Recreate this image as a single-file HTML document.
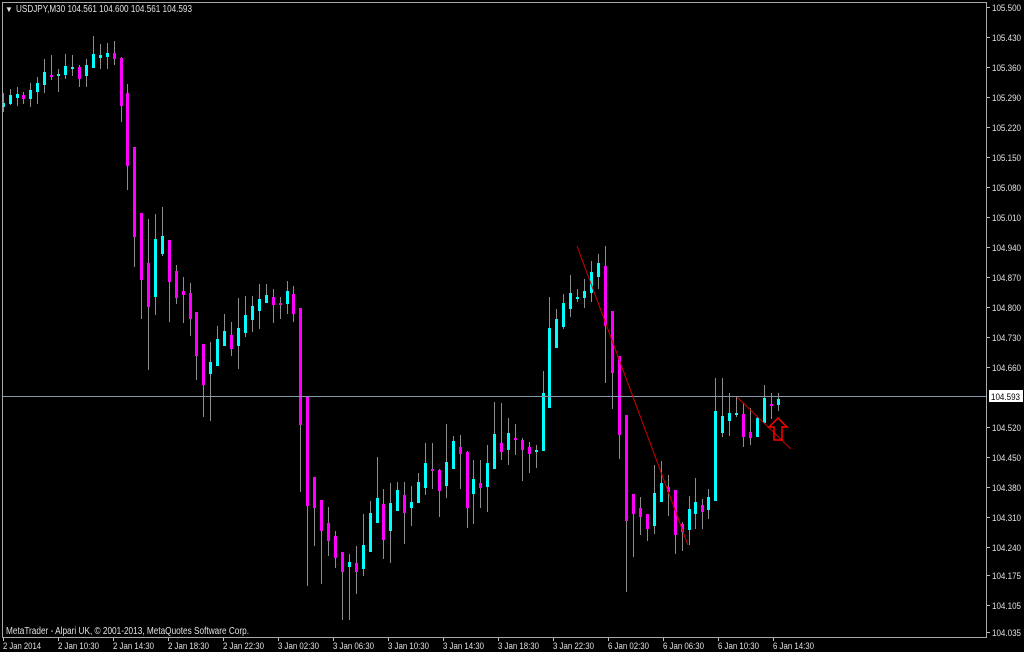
<!DOCTYPE html>
<html><head><meta charset="utf-8"><style>
html,body{margin:0;padding:0;background:#000;width:1024px;height:652px;overflow:hidden}
svg{display:block}
text{font-family:"Liberation Sans","DejaVu Sans",sans-serif;font-size:10px;fill:#e0e0e0}
#py text{font-size:9.5px}
#tx text{font-size:9.5px}
</style></head><body>
<svg id="s" width="1024" height="652" viewBox="0 0 1024 652" xmlns="http://www.w3.org/2000/svg">
<rect width="1024" height="652" fill="#000"/>
<g id="c"></g>
<line x1="2" y1="396.5" x2="986" y2="396.5" stroke="#8797ab" stroke-width="1"/>
<line x1="577" y1="246" x2="688" y2="545" stroke="#d00000" stroke-width="1"/>
<line x1="737" y1="397" x2="791" y2="449" stroke="#d00000" stroke-width="1"/>
<path d="M778 418 L787 427 L782 427 L782 440 L774 440 L774 427 L769 427 Z" fill="none" stroke="#ff0000" stroke-width="1.5"/>
<rect x="2.5" y="2.5" width="984" height="635" fill="none" stroke="#a8a8a8" stroke-width="1"/>
<text x="5" y="12" style="font-size:8px">▼</text>
<text x="16" y="12" textLength="176" lengthAdjust="spacingAndGlyphs">USDJPY,M30  104.561 104.600 104.561 104.593</text>
<text x="6" y="634" textLength="243" lengthAdjust="spacingAndGlyphs">MetaTrader - Alpari UK, © 2001-2013, MetaQuotes Software Corp.</text>
<g id="py">
<text x="992" y="11" textLength="29" lengthAdjust="spacingAndGlyphs">105.500</text>
<text x="992" y="41" textLength="29" lengthAdjust="spacingAndGlyphs">105.430</text>
<text x="992" y="71" textLength="29" lengthAdjust="spacingAndGlyphs">105.360</text>
<text x="992" y="101" textLength="29" lengthAdjust="spacingAndGlyphs">105.290</text>
<text x="992" y="131" textLength="29" lengthAdjust="spacingAndGlyphs">105.220</text>
<text x="992" y="161" textLength="29" lengthAdjust="spacingAndGlyphs">105.150</text>
<text x="992" y="191" textLength="29" lengthAdjust="spacingAndGlyphs">105.080</text>
<text x="992" y="221" textLength="29" lengthAdjust="spacingAndGlyphs">105.010</text>
<text x="992" y="251" textLength="29" lengthAdjust="spacingAndGlyphs">104.940</text>
<text x="992" y="281" textLength="29" lengthAdjust="spacingAndGlyphs">104.870</text>
<text x="992" y="311" textLength="29" lengthAdjust="spacingAndGlyphs">104.800</text>
<text x="992" y="341" textLength="29" lengthAdjust="spacingAndGlyphs">104.730</text>
<text x="992" y="371" textLength="29" lengthAdjust="spacingAndGlyphs">104.660</text>
<text x="992" y="431" textLength="29" lengthAdjust="spacingAndGlyphs">104.520</text>
<text x="992" y="461" textLength="29" lengthAdjust="spacingAndGlyphs">104.450</text>
<text x="992" y="491" textLength="29" lengthAdjust="spacingAndGlyphs">104.380</text>
<text x="992" y="521" textLength="29" lengthAdjust="spacingAndGlyphs">104.310</text>
<text x="992" y="551" textLength="29" lengthAdjust="spacingAndGlyphs">104.240</text>
<text x="992" y="579" textLength="29" lengthAdjust="spacingAndGlyphs">104.175</text>
<text x="992" y="609" textLength="29" lengthAdjust="spacingAndGlyphs">104.105</text>
<text x="992" y="636" textLength="29" lengthAdjust="spacingAndGlyphs">104.035</text>
</g>
<g stroke="#c0c0c0" stroke-width="1">
<line x1="987" y1="7.5" x2="990" y2="7.5"/><line x1="987" y1="37.5" x2="990" y2="37.5"/><line x1="987" y1="67.5" x2="990" y2="67.5"/><line x1="987" y1="97.5" x2="990" y2="97.5"/><line x1="987" y1="127.5" x2="990" y2="127.5"/><line x1="987" y1="157.5" x2="990" y2="157.5"/><line x1="987" y1="187.5" x2="990" y2="187.5"/><line x1="987" y1="217.5" x2="990" y2="217.5"/><line x1="987" y1="247.5" x2="990" y2="247.5"/><line x1="987" y1="277.5" x2="990" y2="277.5"/><line x1="987" y1="307.5" x2="990" y2="307.5"/><line x1="987" y1="337.5" x2="990" y2="337.5"/><line x1="987" y1="367.5" x2="990" y2="367.5"/><line x1="987" y1="427.5" x2="990" y2="427.5"/><line x1="987" y1="457.5" x2="990" y2="457.5"/><line x1="987" y1="487.5" x2="990" y2="487.5"/><line x1="987" y1="517.5" x2="990" y2="517.5"/><line x1="987" y1="547.5" x2="990" y2="547.5"/><line x1="987" y1="575.5" x2="990" y2="575.5"/><line x1="987" y1="605.5" x2="990" y2="605.5"/><line x1="987" y1="632.5" x2="990" y2="632.5"/>
</g>
<rect x="989" y="390" width="34" height="12" fill="#fff"/>
<text x="991" y="400" style="fill:#000;font-size:9.5px" textLength="29" lengthAdjust="spacingAndGlyphs">104.593</text>
<g id="tx">
<text x="3" y="649" textLength="38" lengthAdjust="spacingAndGlyphs">2 Jan 2014</text>
<text x="58" y="649" textLength="41" lengthAdjust="spacingAndGlyphs">2 Jan 10:30</text>
<text x="113" y="649" textLength="41" lengthAdjust="spacingAndGlyphs">2 Jan 14:30</text>
<text x="168" y="649" textLength="41" lengthAdjust="spacingAndGlyphs">2 Jan 18:30</text>
<text x="223" y="649" textLength="41" lengthAdjust="spacingAndGlyphs">2 Jan 22:30</text>
<text x="278" y="649" textLength="41" lengthAdjust="spacingAndGlyphs">3 Jan 02:30</text>
<text x="333" y="649" textLength="41" lengthAdjust="spacingAndGlyphs">3 Jan 06:30</text>
<text x="388" y="649" textLength="41" lengthAdjust="spacingAndGlyphs">3 Jan 10:30</text>
<text x="443" y="649" textLength="41" lengthAdjust="spacingAndGlyphs">3 Jan 14:30</text>
<text x="498" y="649" textLength="41" lengthAdjust="spacingAndGlyphs">3 Jan 18:30</text>
<text x="553" y="649" textLength="41" lengthAdjust="spacingAndGlyphs">3 Jan 22:30</text>
<text x="608" y="649" textLength="41" lengthAdjust="spacingAndGlyphs">6 Jan 02:30</text>
<text x="663" y="649" textLength="41" lengthAdjust="spacingAndGlyphs">6 Jan 06:30</text>
<text x="718" y="649" textLength="41" lengthAdjust="spacingAndGlyphs">6 Jan 10:30</text>
<text x="773" y="649" textLength="41" lengthAdjust="spacingAndGlyphs">6 Jan 14:30</text>
</g>
<g id="tt" stroke="#c0c0c0"></g>
</svg>
<script>
var d=[[3,93,112,103,107,1],[10,89,105,95,104,1],[17,87,106,94,98,1],[23,92,104,95,99,0],[30,83,107,90,99,1],[37,77,104,83,92,1],[44,59,93,72,85,1],[51,55,80,75,77,0],[58,69,92,74,76,1],[65,54,79,66,75,1],[72,55,76,67,69,1],[79,65,87,67,79,0],[86,59,87,65,76,1],[93,36,68,54,68,1],[100,44,69,55,58,1],[107,43,69,53,57,1],[114,41,65,53,59,0],[121,57,122,58,106,0],[127,84,190,93,166,0],[134,147,267,147,237,0],[141,213,319,213,280,0],[148,219,370,263,307,0],[155,214,315,239,297,1],[162,207,256,236,254,1],[169,240,322,240,282,0],[176,265,304,271,298,0],[183,277,323,291,295,0],[190,283,336,293,319,0],[196,312,380,312,356,0],[203,344,417,344,385,0],[210,342,421,362,374,1],[217,326,366,339,366,1],[224,314,346,331,346,1],[231,322,356,335,349,0],[238,298,369,328,346,1],[245,296,337,315,333,1],[252,296,332,306,320,1],[259,284,329,299,311,1],[266,284,303,295,303,1],[273,289,323,297,305,0],[280,297,319,303,304,0],[287,281,314,291,304,1],[293,286,322,294,314,0],[300,308,492,308,425,0],[307,396,586,396,506,0],[314,477,546,477,508,0],[321,500,584,500,531,0],[328,507,556,523,541,0],[335,531,568,536,558,0],[342,552,620,552,572,0],[349,554,620,562,567,1],[356,546,594,563,572,0],[363,514,576,545,569,1],[370,501,552,513,552,1],[377,457,523,498,523,1],[383,489,559,504,540,0],[390,483,563,503,531,1],[397,482,511,490,511,1],[404,482,544,495,513,0],[411,486,526,502,508,1],[418,473,503,482,503,1],[425,443,495,463,488,1],[432,443,489,469,470,0],[439,469,517,470,491,0],[446,424,498,462,486,1],[453,436,469,441,469,1],[460,435,489,447,454,0],[467,451,528,452,508,0],[473,460,524,479,494,1],[480,460,508,483,488,0],[487,445,512,463,487,1],[494,402,469,434,469,1],[501,403,460,443,452,0],[508,418,465,433,450,1],[515,424,455,438,440,0],[522,438,481,440,450,0],[529,442,473,447,454,0],[536,445,468,450,452,1],[543,371,451,393,451,1],[549,297,408,328,408,1],[556,309,348,319,348,1],[563,294,329,303,327,1],[570,275,317,293,309,1],[577,289,302,297,299,1],[584,279,308,291,298,1],[591,261,302,272,293,1],[598,254,289,263,277,1],[605,246,383,266,326,0],[612,311,409,311,373,0],[619,356,459,356,435,0],[626,415,592,415,521,0],[633,494,557,494,514,0],[640,497,535,508,517,0],[647,514,541,514,529,0],[654,465,534,493,526,1],[661,461,502,483,502,1],[668,475,516,487,492,0],[675,490,554,490,535,0],[682,522,551,524,532,0],[689,496,545,509,530,1],[695,478,529,502,514,1],[702,499,529,505,512,0],[708,489,519,497,510,1],[715,378,501,411,501,1],[722,378,437,416,433,1],[729,393,436,413,421,1],[736,397,417,413,415,1],[743,403,447,414,437,0],[750,408,445,432,438,0],[757,417,437,418,437,1],[764,385,423,398,423,1],[771,393,419,404,405,0],[778,393,411,399,405,1]];
var h='';
d.forEach(function(a){
h+='<rect x="'+a[0]+'" y="'+a[1]+'" width="1" height="'+(a[2]-a[1])+'" fill="#8c8c8c"/>';
var bh=Math.max(2,a[4]-a[3]);
h+='<rect x="'+(a[0]-1)+'" y="'+a[3]+'" width="3" height="'+bh+'" fill="'+(a[5]?'#00ffff':'#ff00ff')+'"/>';
});
document.getElementById('c').innerHTML=h;
var t='';for(var k=0;k<15;k++){var x=3+55*k+0.5;t+='<line x1="'+x+'" y1="638" x2="'+x+'" y2="641"/>';}
document.getElementById('tt').innerHTML=t;
</script>
</body></html>
